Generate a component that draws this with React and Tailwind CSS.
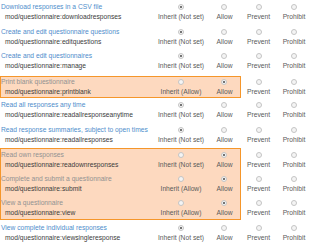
import React from "react";

const rows = [
  { t: "Download responses in a CSV file", c: "mod/questionnaire:downloadresponses", inh: "Inherit (Not set)", sel: 0 },
  { t: "Create and edit questionnaire questions", c: "mod/questionnaire:editquestions", inh: "Inherit (Not set)", sel: 0 },
  { t: "Create and edit questionnaires", c: "mod/questionnaire:manage", inh: "Inherit (Not set)", sel: 0 },
  { t: "Print blank questionnaire", c: "mod/questionnaire:printblank", inh: "Inherit (Allow)", sel: 1, hl: true },
  { t: "Read all responses any time", c: "mod/questionnaire:readallresponseanytime", inh: "Inherit (Not set)", sel: 0 },
  { t: "Read response summaries, subject to open times", c: "mod/questionnaire:readallresponses", inh: "Inherit (Not set)", sel: 0 },
  { t: "Read own responses", c: "mod/questionnaire:readownresponses", inh: "Inherit (Not set)", sel: 1, hl: true },
  { t: "Complete and submit a questionnaire", c: "mod/questionnaire:submit", inh: "Inherit (Allow)", sel: 1, hl: true },
  { t: "View a questionnaire", c: "mod/questionnaire:view", inh: "Inherit (Allow)", sel: 1, hl: true },
  { t: "View complete individual responses", c: "mod/questionnaire:viewsingleresponse", inh: "Inherit (Not set)", sel: 0 },
];

function Radio({ on }) {
  return (
    <span className="flex h-[6px] w-[6px] items-center justify-center rounded-full border border-[#c4c4c4] bg-[#f4f4f4]">
      {on ? <span className="h-[2px] w-[2px] rounded-full bg-[#4a4a4a]" /> : null}
    </span>
  );
}

function Opt({ label, on, cls }) {
  return (
    <div className={"flex flex-col items-center " + cls}>
      <div className="flex h-[10px] items-center">
        <Radio on={on} />
      </div>
      <div className="h-[10px] leading-[10px] whitespace-nowrap text-[#5a5a5a]">{label}</div>
    </div>
  );
}

function LeftRow({ r, h }) {
  return (
    <div className={"flex " + h}>
      <div className="w-[157px]">
        <div className={"h-[10px] leading-[10px] whitespace-nowrap " + (r.hl ? "text-[#929292]" : "text-[#4f8dcb]")}>{r.t}</div>
        <div className="h-[10px] pl-[4px] leading-[10px] whitespace-nowrap text-[#3c3c3c]">{r.c}</div>
      </div>
      <Opt label={r.inh} on={r.sel === 0} cls="w-[46px]" />
      <div className="flex w-[36px] justify-center pl-[5px]">
        <Opt label="Allow" on={r.sel === 1} cls="" />
      </div>
    </div>
  );
}

function RightRow({ h }) {
  return (
    <div className={"flex " + h}>
      <Opt label="Prevent" on={false} cls="w-[33px]" />
      <Opt label="Prohibit" on={false} cls="w-[38px]" />
    </div>
  );
}

function Group({ items, hl, mt, pad, hs }) {
  return (
    <div className={"flex " + mt}>
      <div className={"w-[241px] border " + (hl ? "border-[#f5962a] bg-[#fdd9bf]" : "border-transparent")}>
        <div className={pad}>
          {items.map((r, i) => (
            <LeftRow key={i} r={r} h={hs[i]} />
          ))}
        </div>
      </div>
      <div className="border border-transparent">
        <div className={pad}>
          {items.map((r, i) => (
            <RightRow key={i} h={hs[i]} />
          ))}
        </div>
      </div>
    </div>
  );
}

export default function App() {
  return (
    <div
      className="h-[243px] w-[320px] overflow-hidden bg-white text-[6.7px]"
      style={{ fontFamily: '"Liberation Sans", Arial, sans-serif' }}
    >
      <Group items={rows.slice(0, 3)} mt="mt-[1px]" pad="" hs={["h-[24.5px]", "h-[24.5px]", "h-[24.5px]"]} />
      <Group items={rows.slice(3, 4)} hl mt="-mt-[0.5px]" pad="" hs={["h-[20px]"]} />
      <Group items={rows.slice(4, 6)} mt="mt-[0px]" pad="pt-[1px]" hs={["h-[24.5px]", "h-[24.5px]"]} />
      <Group items={rows.slice(6, 9)} hl mt="-mt-[2px]" pad="pt-[1px]" hs={["h-[24px]", "h-[24px]", "h-[21px]"]} />
      <Group items={rows.slice(9, 10)} mt="mt-[0px]" pad="pt-[2px]" hs={["h-[24.5px]"]} />
    </div>
  );
}
